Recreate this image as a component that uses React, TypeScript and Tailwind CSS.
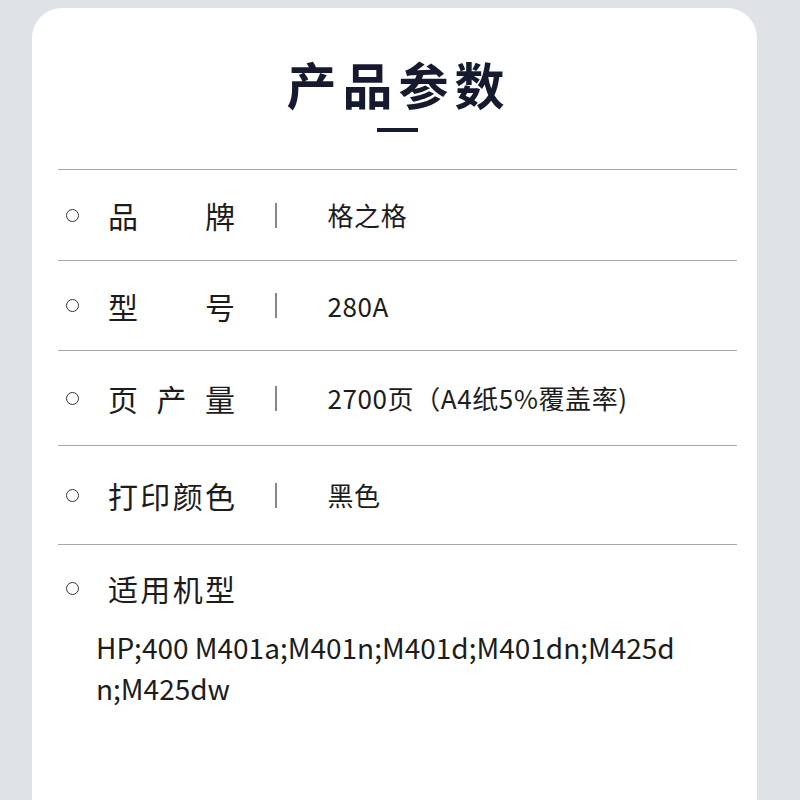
import { memo } from 'react'

const font = { fontFamily: '"Noto Sans CJK SC", "Noto Sans", sans-serif' }

interface RowProps {
    label: string
    value: string
    height: string
}

const Row = memo(({ label, value, height }: RowProps) => {
    return (
        <div className={`flex items-center border-b border-[#a8a8a8] ${height}`}>
            <span className="ml-[8px] w-[13px] h-[13px] rounded-full border-[1.5px] border-[#333] shrink-0"></span>
            <span className="ml-[29px] w-[127px] text-[30px] leading-none text-[#1c1c1c] [text-align-last:justify]">
                {label}
            </span>
            <span className="ml-[40px] w-[1.5px] h-[25px] bg-[#888]"></span>
            <span className="ml-[51px] text-[26px] tracking-[0.6px] leading-none text-[#1c1c1c]">{value}</span>
        </div>
    )
})
Row.displayName = 'Row'

const rows = [
    { label: '品牌', value: '格之格', height: 'h-[91px]' },
    { label: '型号', value: '280A', height: 'h-[90px]' },
    { label: '页产量', value: '2700页（A4纸5%覆盖率)', height: 'h-[95px]' },
    { label: '打印颜色', value: '黑色', height: 'h-[99px]' },
]

export default function App() {
    return (
        <div className="h-[800px] overflow-hidden bg-[#dfe3e8] pl-8 pr-[43px] pt-2" style={font}>
            <div className="bg-white rounded-t-[30px] h-[820px] pl-[26px] pr-5 flex flex-col">
                <h1 className="mt-[50px] text-center text-[50px] leading-none font-bold tracking-[6px] text-[#151a2e] pl-[2px]">
                    产品参数
                </h1>
                <div className="mx-auto mt-[20px] w-[41px] h-1 bg-[#151a2e]"></div>

                <div className="mt-[37px] border-t border-[#a8a8a8]">
                    {rows.map((row) => (
                        <Row key={row.label} {...row} />
                    ))}
                </div>

                <div className="flex items-center mt-[28px] h-[30px]">
                    <span className="ml-[8px] w-[13px] h-[13px] rounded-full border-[1.5px] border-[#333] shrink-0"></span>
                    <span className="ml-[29px] w-[127px] text-[30px] leading-none text-[#1c1c1c] [text-align-last:justify]">
                        适用机型
                    </span>
                </div>
                <p className="mt-[24px] ml-[38px] text-[28px] leading-[41px] text-[#1c1c1c]">
                    HP;400 M401a;M401n;M401d;M401dn;M425d
                    <br />
                    n;M425dw
                </p>
            </div>
        </div>
    )
}
